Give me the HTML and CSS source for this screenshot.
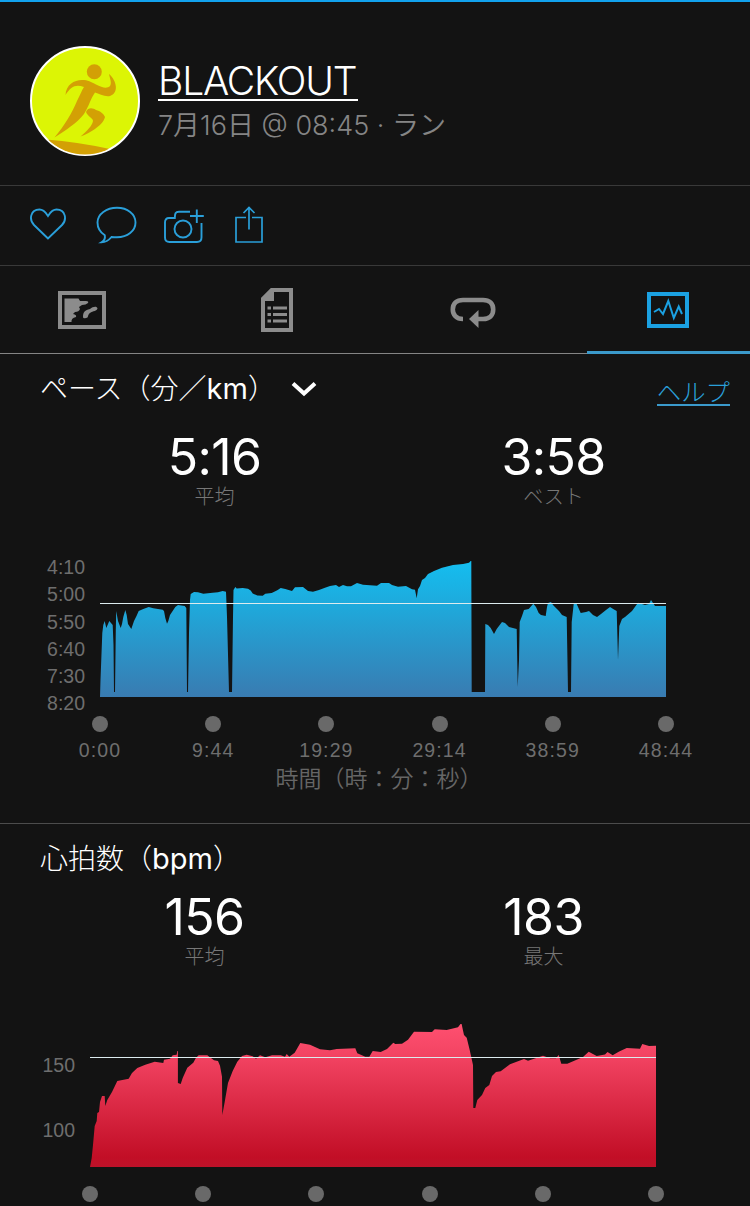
FILE: index.html
```html
<!DOCTYPE html>
<html lang="ja">
<head>
    <meta charset="UTF-8" />
    <meta name="viewport" content="width=device-width, initial-scale=1" />
    <title>BLACKOUT</title>
    <link rel="stylesheet" href="styles.css">
</head>
<body>

<header class="activity">
    <svg class="avatar" viewBox="0 0 110 110" aria-hidden="true">
        <defs><clipPath id="face"><circle cx="55" cy="55" r="53.5" /></clipPath></defs>
        <circle cx="55" cy="55" r="54" fill="#dcf505" stroke="#fff" stroke-width="2" />
        <g fill="#d3a005">
            <circle cx="64.3" cy="25.700" r="7.5" />
            <path d="M35.500 49C36 39 44 34 52 34C58 34 61 36 66 38.500C72 41.500 77 43 80 40C82 37 80 33 79 28C87 35 89 47 80 50C75 51 69 48 65 46.500C61 52 59 60 54 68C47 77 36 84 24.500 91.500C35 79 42 67 47 55C50 49 52 44 54 41C46 38 41 40 35.500 49Z" />
            <path d="M56 66C58 61 63 62 66 64C70 65 74 68 75 71C74 76 69 80 65 83C60 86 56 89 50.500 90.500C57 85 62 80 63 75C63 72 58 71 56 66Z" />
            <path d="M16 93.500Q48 96 80 103L78 110H16Z" clip-path="url(#face)" />
        </g>
    </svg>
    <div class="activity-text">
        <a class="activity-name">BLACKOUT</a>
        <div class="activity-date">7月16日 @ 08:45 · ラン</div>
    </div>
</header>

<div class="actions">
    <svg width="38" height="38" viewBox="0 0 38 38" aria-label="Like">
        <path d="M19 32.500L5 19C0 14 1 3.500 10.500 3.500C15 3.500 17 7 19 10C21 7 23 3.500 27.500 3.500C37 3.500 38 14 33 19Z" />
    </svg>
    <svg width="42" height="38" viewBox="0 0 42 38" aria-label="Comment">
        <path d="M21 1.800C31.500 1.800 39.500 8 39.500 16.500S31.500 31.300 21 31.300C19 31.300 17 31.200 15.500 31C13 34 9.500 36.300 5.500 36.300C8.500 34.500 9.300 32 8.800 29.300C4.500 26.500 1.500 22 1.500 16.500C1.500 8 10.500 1.800 21 1.800Z" />
    </svg>
    <svg width="42" height="38" viewBox="0 0 42 38" aria-label="Add photo">
        <path d="M27 5.800H16C12 5.800 12 8 11.800 12H6Q2 12 2 16.500V31.500Q2 36 6.500 36H34Q38.500 36 38.500 31.500V17" />
        <circle cx="20" cy="23" r="8.500" />
        <path d="M33.800 3.500V17M27 10H40.800" />
    </svg>
    <svg width="30" height="38" viewBox="0 0 30 38" aria-label="Share">
        <path d="M12 11.500H2V36H28V11.500H18M15 23.500V2M9.500 7L15 1.500L20.500 7" stroke-width="1.700" />
    </svg>
</div>

<nav class="tabs">
    <a class="tab">
        <svg width="48" height="38" viewBox="0 0 48 38">
            <rect x="2" y="2" width="44" height="34" fill="none" stroke="currentColor" stroke-width="4" />
            <path d="M6.500 7.500H20.500L22 10H28Q31 10 30 12Q28 14 24 14L21 16L22 18Q21 21 17 21L15 23Q19 24 18 26Q13 27 13.500 31H6.500Z" />
            <path d="M25 26C25 21 27 19 32 18C35 15.500 39 15 39.500 17.500C39 20 35 20 32 22C29 24 31 27 28 27Q25 28 25 26Z" />
        </svg>
    </a>
    <a class="tab">
        <svg width="32" height="44" viewBox="0 0 32 44">
            <path d="M11 2H30V42H2V11Z" fill="none" stroke="currentColor" stroke-width="4" />
            <path d="M0 10L10 0H13V13H0Z" />
            <path d="M12 20H26M12 26.500H26M12 33H26M6.500 20H10M6.500 26.500H10M6.500 33H10" stroke="currentColor" stroke-width="3" />
        </svg>
    </a>
    <a class="tab tab-lap">
        <svg width="46" height="32" viewBox="0 0 46 32">
            <path d="M13 23C6 23 2.800 18.500 2.800 13.500C2.800 7.500 6.500 4 13 4H33C39.500 4 43.200 7.500 43.200 13.500S39.500 23 33 23H27" fill="none" stroke="currentColor" stroke-width="4.600" />
            <path d="M19 23L28.500 14V32Z" />
        </svg>
    </a>
    <a class="tab active">
        <svg width="42" height="36" viewBox="0 0 42 36">
            <rect x="2" y="2" width="38" height="32" fill="none" stroke="currentColor" stroke-width="4" />
            <path d="M7 20L12 17L16 22L21.300 9L26.800 26L31.700 14.500L35 22" fill="none" stroke="currentColor" stroke-width="2" />
        </svg>
    </a>
</nav>

<section class="metric pace">
    <div class="metric-head">
        <h2>ペース（分／<span>km</span>）</h2>
        <svg class="chevron" width="26" height="16" viewBox="0 0 26 16"><path d="M2 2.500L13 12.500L24 2.500" /></svg>
        <a class="help">ヘルプ</a>
    </div>
    <div class="stats">
        <div class="stat"><b>5:16</b><span>平均</span></div>
        <div class="stat"><b>3:58</b><span>ベスト</span></div>
    </div>
    <div class="chart">
        <div class="y-axis">
            <span>4:10</span><span>5:00</span><span>5:50</span><span>6:40</span><span>7:30</span><span>8:20</span>
        </div>
        <svg class="plot" width="566" height="147" viewBox="0 0 566 147">
            <defs>
                <linearGradient id="blue" x1="0" y1="0" x2="0" y2="1">
                    <stop offset="0" stop-color="#14bef0" />
                    <stop offset="0.350" stop-color="#1fa8da" />
                    <stop offset="1" stop-color="#397bb1" />
                </linearGradient>
            </defs>
            <path fill="url(#blue)" d="M0 147L.5 130L2.300 83L3.300 75L4.700 71L6.300 78L9.300 71L12.700 75L13.500 95L14 142H15L15.800 80L16.200 61L18 71L20.700 78L22 74L23.300 67L25.300 60L26.700 65L28 74L31.300 79L34 71L36.500 66L38.700 61L43.300 59L48.700 57L53.300 58.300L62.700 59.700L64 61L65.300 68L67 73.700L68.300 71L70 65L72 62L75.300 57L78 55L84.700 56L86.300 58L87 142H88L89 83L90 50L90.700 44L94 42L98 42.300L103.300 43.700L112.700 42.700L118 42.300L122.700 41L126 41.700L127 67L129 142H132L133 67L133.500 40L135.300 37L136.700 38.500L142.700 38L148 38.700L150.700 40.500L152.700 43.500L157.300 45.500L162.700 45.700L165.300 43.700L171.700 43L177.300 40.300L180.700 38L185.300 39L192 41L195 37.300L203 37L208 41L213 41.700L219 40L225 37.700L230 36L236 35L239 37L243 35L247 36.300H251L257 33L263 34.700L277 35.700L281 33H289L292 35L298 36.700L306 36L312 39.300L315 39.700L316.700 48.300L318 39.300L320 36L322 30L325 28L328 24L334 21L342 17.700L353 15L363 14L369 12.700L370.700 11H371.300L371.700 142H385L385.300 74L388 75L390.700 78L394 84L396.700 79L402 72L405 73L409 77L416.700 79L417.700 137L419 110L419.700 72L422 66L424 60L428.700 59L433.300 53.700L436 57L438.700 63L441 65L445.700 66L447 57L448 53L451 52L453 55L459 61L462 65L466.700 67L468 142H471L471.700 72L473.700 54H476.700L480.700 63L486 62L489 61L493 65L497 67L501 64L506 60L510 57L514 59.500L516.700 61L518 110L519.300 76L522 69L525 67L532 61L538 52.700L545 55L549 54L551 50L555 56H566V147Z" />
            <path class="average" d="M0 53.500H566" />
        </svg>
    </div>
    <div class="dots"><i></i><i></i><i></i><i></i><i></i><i></i></div>
    <div class="x-axis">
        <span>0:00</span><span>9:44</span><span>19:29</span><span>29:14</span><span>38:59</span><span>48:44</span>
    </div>
    <div class="axis-title">時間（時：分：秒）</div>
</section>

<section class="metric heart">
    <div class="metric-head">
        <h2>心拍数（<span>bpm</span>）</h2>
    </div>
    <div class="stats">
        <div class="stat"><b>156</b><span>平均</span></div>
        <div class="stat"><b>183</b><span>最大</span></div>
    </div>
    <div class="chart">
        <div class="y-axis">
            <span>150</span><span>100</span>
        </div>
        <svg class="plot" width="566" height="152" viewBox="0 0 566 152">
            <defs>
                <linearGradient id="red" x1="0" y1="0" x2="0" y2="1">
                    <stop offset="0" stop-color="#ff5070" />
                    <stop offset="0.200" stop-color="#f44564" />
                    <stop offset="0.930" stop-color="#c20e26" />
                    <stop offset="1" stop-color="#bd1229" />
                </linearGradient>
            </defs>
            <path fill="url(#red)" d="M0 152L1.700 143L3 130L4.700 111L6.700 106L7.300 98L9 97L10 87L12 81H14.700L15.300 91L17.300 85L22 77L27.300 66L38.700 63.700L42 58L47.300 53L55.300 49.700L64.700 46.700L73.300 48L74 44.700L80 43.700L82.700 40.300L86.700 39.700L87.300 36H87.900V68L90.700 69L92.700 63L97.300 52.700L103.300 47.700L106 42.700L108.700 40.300H117.300L124 45.300L128 46L130 50.700L132 61.700L132.300 100L134.700 87L138 68L142.700 56L147.300 46.700L152 41L156.700 39.700L162.700 41.300L166 43.700L170 40.300L175.300 42.300L182 40.300H190.700L195 41.700L196.700 39L199.300 41.700L204.700 37.700L210.300 28L220 29.700L230 34.300L240 35.300L246.700 34L265.300 33.300L267.300 38.300L275.300 41.700H279.300L282.700 36L290.700 37L297 34L303.300 27.700L305.300 29L312 28.700L318 24.700L324 16.700L342 17L344.700 14.300L356.700 15L368 12.300L370.500 9H371.600L374 20L376.700 22.700L379.700 35L383 50L383.300 93H385.300L387.300 85L392 80L395.300 73L399.300 70L402 61L406 57L410.700 56.300L420 49.300L434 44L438 45.700L453 40.700L460 43.300H466L468.700 40L471.300 48.700H477.300L493 42L498.700 36.700L506.700 41L515 39.500L517.500 37L522.700 40.300L528.700 36.700L536.700 33L550 33.700L552.300 29L559 31L566 30.700V152Z" />
            <path class="average" d="M0 42.500H566" />
        </svg>
    </div>
    <div class="dots"><i></i><i></i><i></i><i></i><i></i><i></i></div>
</section>

</body>
</html>
```
FILE: styles.css
```css
* {
  box-sizing: border-box;
}
body {
  margin: 0;
  height: 1206px;
  overflow: hidden;
  background: #131313;
  border-top: 2px solid #12a2ee;
  color: #fff;
  font-family: Inter, "Noto Sans CJK JP", sans-serif;
  font-weight: 300;
}
.activity {
  display: flex;
  height: 184px;
  padding: 44px 30px 0;
  gap: 18px;
  border-bottom: 1px solid #393939;
}
.avatar {
  width: 110px;
  height: 110px;
}
.activity-text {
  padding-top: 14px;
}
.activity-name {
  display: block;
  width: 200px;
  height: 41px;
  font-size: 39px;
  line-height: 41px;
  letter-spacing: -1.2px;
  white-space: nowrap;
  border-bottom: 2px solid #fff;
}
.activity-date {
  margin-top: 6px;
  font-size: 27px;
  font-weight: 350;
  line-height: 38px;
  color: #858585;
  white-space: nowrap;
}
.actions {
  display: flex;
  align-items: flex-start;
  height: 80px;
  padding: 20px 29px;
  border-bottom: 1px solid #393939;
}
.actions svg {
  fill: none;
  stroke: #2a9fd9;
  stroke-width: 1.9;
  margin-right: 29px;
}
.actions svg:nth-child(2) {
  margin-right: 25px;
}
.tabs {
  display: flex;
  justify-content: space-between;
  height: 88px;
  border-bottom: 1px solid #858585;
}
.tab {
  display: flex;
  align-items: center;
  justify-content: center;
  width: 163px;
  height: 88px;
  color: #8c8c8c;
}
.tab svg {
  fill: currentColor;
}
.tab-lap {
  padding-top: 4px;
}
.tab.active {
  color: #1ba1e2;
  padding-top: 3px;
  border-bottom: 3px solid #3b9acb;
}
.metric-head {
  display: flex;
  align-items: center;
  height: 70px;
  padding: 0 20px 0 40px;
}
.metric h2 {
  margin: 0;
  font-size: 28px;
  font-weight: 300;
  line-height: 40px;
  white-space: nowrap;
}
.metric h2 span {
  font-size: 29px;
  font-weight: 400;
}
.chevron {
  margin-left: 15px;
  fill: none;
  stroke: #fff;
  stroke-width: 4;
}
.help {
  margin: 6px 0 0 auto;
  height: 28px;
  font-size: 24.4px;
  line-height: 28px;
  color: #2a9fd9;
  border-bottom: 2px solid #3b9acb;
}
.stats {
  display: flex;
  height: 86px;
  padding-left: 45px;
}
.heart .stats {
  padding-left: 35px;
}
.stat {
  display: flex;
  flex-direction: column;
  align-items: center;
  width: 339px;
}
.stat b {
  font-size: 50px;
  font-weight: 400;
  line-height: 66px;
  letter-spacing: -0.6px;
}
.stat span {
  margin-top: -3px;
  font-size: 20px;
  line-height: 20px;
  color: #777;
}
.chart {
  display: flex;
  height: 147px;
}
.heart .chart {
  height: 152px;
}
.y-axis {
  display: flex;
  flex-direction: column;
  width: 85px;
  margin-right: 15px;
  padding-top: 4px;
  font-family: "Liberation Sans", sans-serif;
  font-size: 19.5px;
  line-height: 27.3px;
  text-align: right;
  color: #6e6e6e;
}
.heart .y-axis {
  width: 75px;
  padding-top: 18px;
  line-height: 65px;
}
.plot {
  flex: none;
}
.average {
  stroke: #dcebee;
  stroke-width: 1.2;
}
.dots {
  display: flex;
  justify-content: space-between;
  width: 582px;
  margin: 19px 0 0 92px;
}
.heart .dots {
  margin-left: 82px;
}
.dots i {
  width: 16px;
  height: 16px;
  border-radius: 50%;
  background: #696969;
}
.x-axis {
  display: flex;
  justify-content: space-between;
  width: 636px;
  margin: 5px 0 0 65px;
  font-family: "Liberation Sans", sans-serif;
  font-size: 19.5px;
  line-height: 26px;
  letter-spacing: 1.1px;
  color: #6e6e6e;
}
.x-axis span {
  width: 70px;
  text-align: center;
}
.axis-title {
  width: 566px;
  margin-left: 96px;
  font-size: 23px;
  font-weight: 350;
  line-height: 32px;
  text-align: center;
  color: #666;
}
.pace {
  height: 470px;
  border-bottom: 1px solid #4c4c4c;
}
.pace .chart {
  margin-top: 40px;
}
.heart .metric-head {
  height: 69px;
}
.heart .stats {
  margin-top: -9px;
}
.heart .chart {
  margin-top: 45px;
}
```
